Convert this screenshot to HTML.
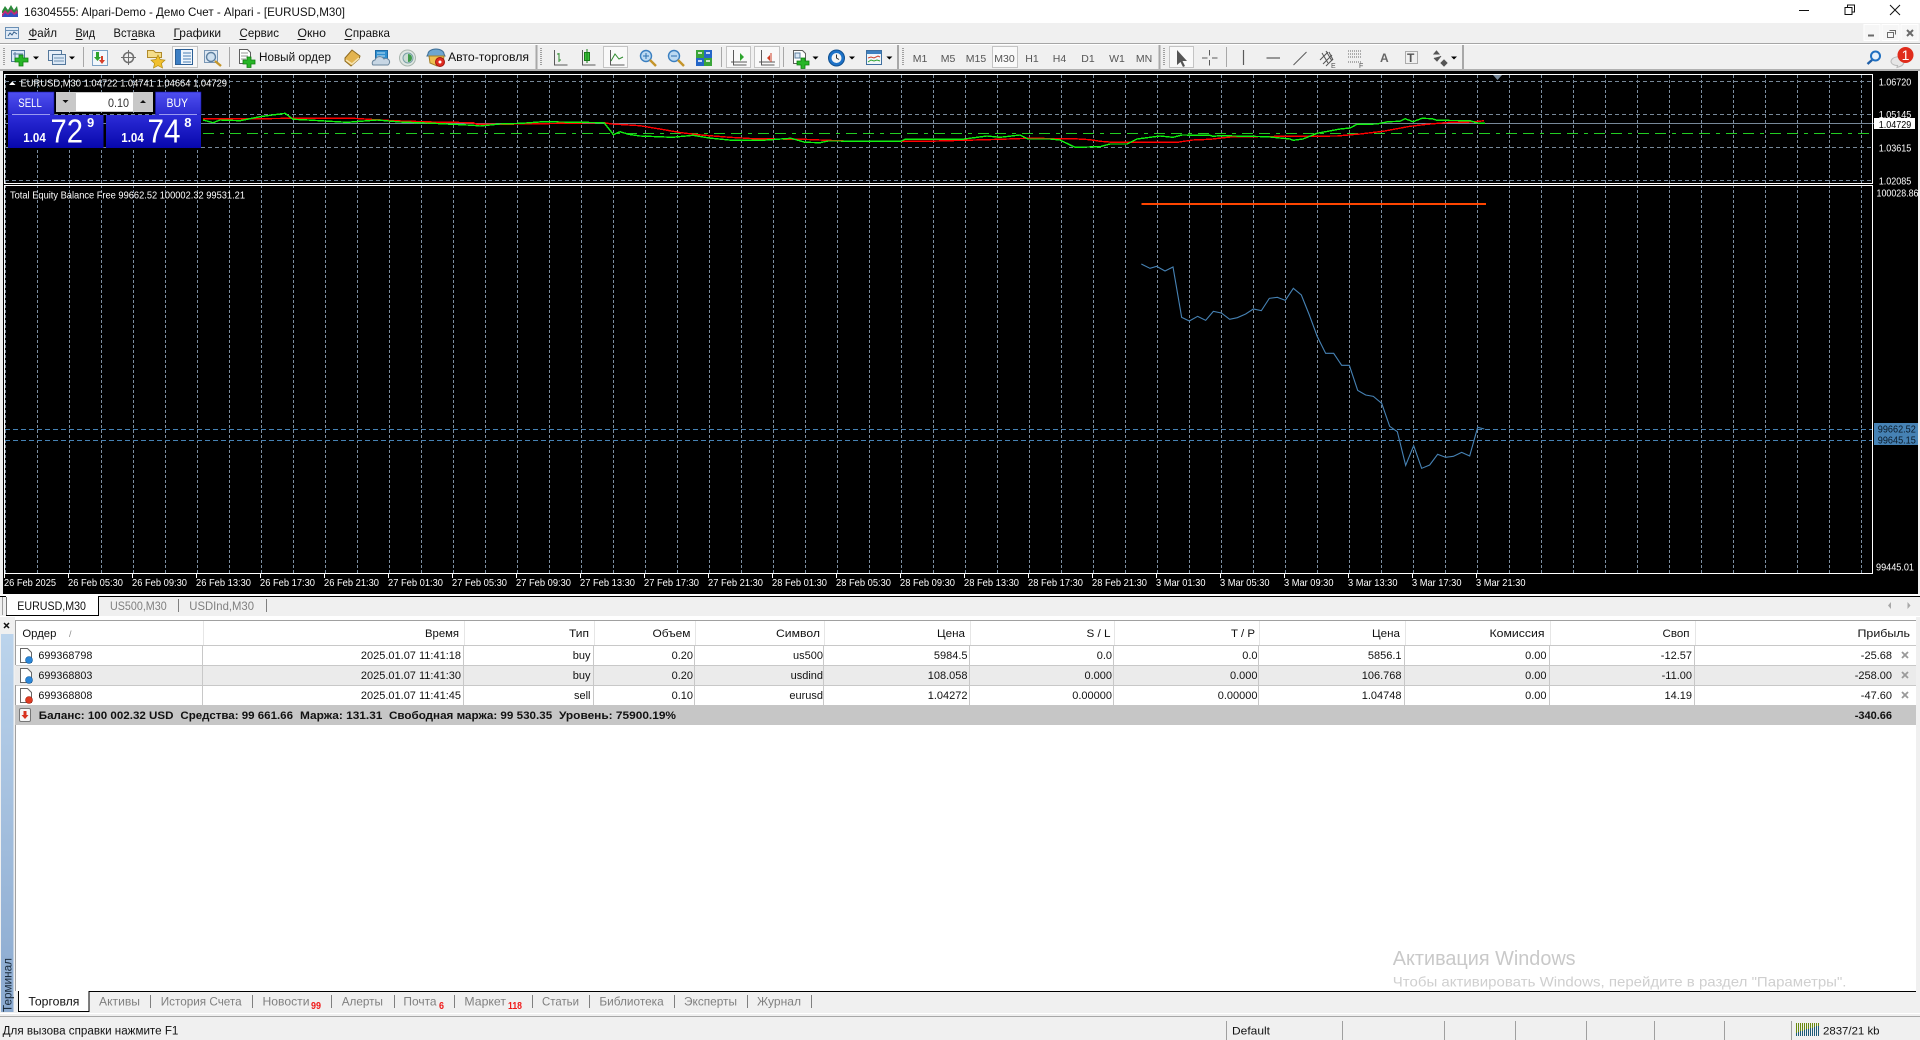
<!DOCTYPE html>
<html lang="ru"><head><meta charset="utf-8"><title>16304555: Alpari-Demo</title>
<style>
html,body{margin:0;padding:0;background:#f0f0f0;overflow:hidden}
svg{display:block}
text{font-family:"Liberation Sans",sans-serif;font-size:11px;fill:#111}
.w text,text.w{fill:#fff}
.c text{font-size:10.5px;fill:#fff}
.g text{fill:#7f7f7f}
.e text,text.e{text-anchor:end}
.tf text{font-size:10.5px;fill:#555;text-anchor:middle}
.sep line{stroke:#a8a8a8}
</style></head><body>
<svg xmlns="http://www.w3.org/2000/svg" width="1920" height="1040" viewBox="0 0 1920 1040">
<defs>
<pattern id="vg" patternUnits="userSpaceOnUse" x="5" y="75" width="32" height="5"><rect width="1" height="3" fill="#7c8ea0"/></pattern>
<linearGradient id="bu" x1="0" y1="0" x2="0" y2="1"><stop offset="0" stop-color="#4f4ff0"/><stop offset="1" stop-color="#2a2ad0"/></linearGradient>
<linearGradient id="bl" x1="0" y1="0" x2="0" y2="1"><stop offset="0" stop-color="#2c2cd8"/><stop offset="1" stop-color="#0707ac"/></linearGradient>
<linearGradient id="st" x1="0" y1="0" x2="0" y2="1"><stop offset="0" stop-color="#bcd4ec"/><stop offset="1" stop-color="#8aa9cf"/></linearGradient>
</defs>

<!-- title bar -->
<rect width="1920" height="23" fill="#fff"/>
<path d="M2 11l3-5 3 4 3-5 3 5 3-4 1 5v2H2z" fill="#2a8a3a"/><path d="M2 14l3-4 3 3 3-4 3 4 3-3 1 4v3H2z" fill="#c02878"/><path d="M2 17l3-4 3 2 3-3 3 3 4-2v4z" fill="#3050c0"/>
<text x="24" y="16" style="font-size:12px" textLength="321" lengthAdjust="spacingAndGlyphs">16304555: Alpari-Demo - Демо Счет - Alpari - [EURUSD,M30]</text>
<path d="M1799 10.5h10" stroke="#111"/>
<path d="M1845 7.500h7v7h-7zM1847.500 7.500v-2.500h7v7h-2.500" fill="none" stroke="#111"/>
<path d="M1890 5l10 10M1900 5l-10 10" stroke="#111" fill="none"/>

<!-- menu bar -->
<rect y="23" width="1920" height="20" fill="#f0f0f0"/>
<rect x="5.500" y="27.500" width="13" height="11" fill="#dfeaf6" stroke="#6a8fb5"/><path d="M5.500 30.500h13" stroke="#6a8fb5"/><path d="M8 36l2-3 2 2 2-3 3 2" fill="none" stroke="#35608c"/>
<text x="28.500" y="37" style="font-size:12px" textLength="28.500" lengthAdjust="spacingAndGlyphs">Файл</text>
<text x="75.500" y="37" style="font-size:12px" textLength="19.500" lengthAdjust="spacingAndGlyphs">Вид</text>
<text x="113.500" y="37" style="font-size:12px" textLength="41.500" lengthAdjust="spacingAndGlyphs">Вставка</text>
<text x="173.500" y="37" style="font-size:12px" textLength="47.500" lengthAdjust="spacingAndGlyphs">Графики</text>
<text x="239.500" y="37" style="font-size:12px" textLength="39.500" lengthAdjust="spacingAndGlyphs">Сервис</text>
<text x="297.500" y="37" style="font-size:12px" textLength="28.500" lengthAdjust="spacingAndGlyphs">Окно</text>
<text x="344.500" y="37" style="font-size:12px" textLength="45.500" lengthAdjust="spacingAndGlyphs">Справка</text>
<path d="M28.500 39.500h8M75.500 39.500h7M131 39.500h6M173.500 39.500h7M239.500 39.500h7M297.500 39.500h8M344.500 39.500h7" stroke="#111"/>

<!-- toolbar -->
<rect y="43" width="1920" height="1" fill="#a6a6a6"/>
<rect y="44" width="1920" height="1" fill="#fff"/>
<rect y="45" width="1920" height="24" fill="#f0f0f0"/>
<rect y="69" width="1920" height="2" fill="#b0b0b0"/>
<g class="sep">
<line x1="83.500" y1="47" x2="83.500" y2="67"/><line x1="229.500" y1="47" x2="229.500" y2="67"/><line x1="721.500" y1="47" x2="721.500" y2="67"/><line x1="783.500" y1="47" x2="783.500" y2="67"/><line x1="1226.500" y1="47" x2="1226.500" y2="67"/>
<line x1="536.500" y1="45" x2="536.500" y2="69" stroke-width="2"/><line x1="898" y1="45" x2="898" y2="69" stroke-width="2"/><line x1="1159.500" y1="45" x2="1159.500" y2="69" stroke-width="2"/><line x1="1463" y1="45" x2="1463" y2="69" stroke-width="2"/>
</g>
<path d="M4 48v18M541 48v18M903 48v18M1164 48v18" stroke="#a0a0a0" stroke-width="2" stroke-dasharray="1 1"/>
<g fill="#f9f9f9" stroke="#c4c4c4"><rect x="172.500" y="46.500" width="25" height="21"/><rect x="603.500" y="46.500" width="24" height="21"/><rect x="726.500" y="46.500" width="24" height="21"/><rect x="754.500" y="46.500" width="25" height="21"/><rect x="992.500" y="46.500" width="25" height="21"/><rect x="1169.500" y="46.500" width="24" height="21"/></g>

<!-- new chart -->
<rect x="11.500" y="50.500" width="13" height="11" fill="#dbe8f6" stroke="#54789c"/><path d="M13 54h10M15 52v8" stroke="#54789c"/>
<path d="M19 55h4v3h5v4h-5v4h-4v-4h-4v-4h4z" fill="#27b527" stroke="#0f7d0f" stroke-width=".8"/>
<path d="M33 56.500h6l-3 3zM69 56.500h6l-3 3z"/>
<!-- profiles -->
<rect x="48.500" y="50.500" width="13" height="10" fill="#e8eff8" stroke="#54789c"/><rect x="52.500" y="54.500" width="13" height="10" fill="#dbe8f6" stroke="#54789c"/><path d="M54 58h10M54 61h10" stroke="#6d8fb0"/>
<!-- expert -->
<rect x="92.500" y="50.500" width="15" height="15" fill="#f2f7fc" stroke="#7da2c5"/><path d="M96 52v5h-2l3.500 4 3.500-4h-2v-5z" fill="#2da32d"/><path d="M103 56v4h2l-3 4-3-4h2v-4z" fill="#d8402a"/>
<!-- crosshair -->
<circle cx="128.500" cy="57.500" r="5" fill="none" stroke="#6e6e6e" stroke-width="1.500"/><path d="M128.500 50v15M121 57.500h15" stroke="#6e6e6e"/>
<!-- folder star -->
<path d="M147.500 50.500h6l2 2h6v5h-14z" fill="#f5dd8a" stroke="#b08a2a"/><path d="M158 55l2.200 4.500 4.800.6-3.500 3.300 1 4.600-4.500-2.400-4.500 2.400 1-4.600-3.500-3.300 4.800-.6z" fill="#f1c02f" stroke="#b08a10" stroke-width=".7"/>
<!-- navigator -->
<rect x="175.500" y="49.500" width="17" height="15" fill="#eef5fc" stroke="#2c5f95"/><rect x="176" y="50" width="5" height="14" fill="#3d7fc4"/><path d="M183 53h8M183 56h8M183 59h8M183 62h8" stroke="#4a7fb5"/>
<!-- terminal search -->
<rect x="204.500" y="50.500" width="13" height="12" fill="#dde7f2" stroke="#7a97b5"/><circle cx="211" cy="57" r="4.500" fill="#cfe0ef" stroke="#5c7fa0" stroke-width="1.400"/><path d="M215 61l6 5" stroke="#c4952a" stroke-width="2.400"/>
<!-- new order -->
<path d="M239.500 49.500h8l3 3v11h-11z" fill="#fff" stroke="#5e5e5e"/><path d="M241 53h7M241 56h7M241 59h5" stroke="#9a9a9a"/>
<path d="M247 57h4v3h4v4h-4v3.500h-4V64h-4v-4h4z" fill="#27b527" stroke="#0f7d0f" stroke-width=".8"/>
<text x="259" y="61" style="font-size:11.500px" textLength="72" lengthAdjust="spacingAndGlyphs">Новый ордер</text>
<!-- book -->
<path d="M345 58l7-8 8 6-1 3-8 7-6-5z" fill="#e3b450" stroke="#8d6a20"/><path d="M346 60l6 4 7-6" fill="none" stroke="#f6e4b0" stroke-width="1.500"/>
<!-- news cloud -->
<rect x="375.500" y="50.500" width="12" height="9" fill="#2f8fd0" stroke="#1d6aa5"/><path d="M377 53h8M377 56h8" stroke="#bfe0f4"/>
<path d="M373 65a3 3 0 0 1 2-5 5 5 0 0 1 9-1 3.500 3.500 0 0 1 4 6z" fill="#c7d6e4" stroke="#6a859c"/>
<!-- signal -->
<circle cx="407.500" cy="58" r="8" fill="#dfe6e2" stroke="#a9b6ae"/><circle cx="408" cy="58" r="5" fill="#cbdcd4" stroke="#7aa0a8"/><path d="M408 54a4 4 0 0 1 0 8z" fill="#3d9a4a"/>
<!-- auto trading -->
<path d="M428 54a8 5 0 0 1 16 0l1 2h-18z" fill="#6ea6cf" stroke="#3e6e96"/><path d="M429 56h15l-1 7-6 3-7-3z" fill="#eec04e" stroke="#a5802a"/><circle cx="440" cy="62" r="4.500" fill="#df2c20" stroke="#a01810"/><circle cx="440" cy="62" r="1.500" fill="#fff"/>
<text x="448" y="61" style="font-size:11.500px" textLength="81" lengthAdjust="spacingAndGlyphs">Авто-торговля</text>
<!-- chart types -->
<g fill="none" stroke="#5a5a5a"><path d="M554.500 50v15h13"/><path d="M610.500 50v15h14"/><path d="M582.500 50v15h13"/></g>
<path d="M559 53v9M557 54h2M559 60h2" stroke="#2e8b2e" fill="none"/>
<rect x="584.500" y="52.500" width="5" height="8" fill="#39c339" stroke="#1a7a1a"/><path d="M587 49v14" stroke="#1a7a1a"/>
<path d="M611 61l4-7 4 5 4-2" fill="none" stroke="#2e8b2e"/>
<!-- zoom -->
<circle cx="646" cy="56" r="5.500" fill="#bcdaf2" stroke="#3a7fc0" stroke-width="1.400"/><path d="M643 56h6M646 53v6" stroke="#2a6fb0"/><path d="M650 60l6 6" stroke="#c4952a" stroke-width="2.400"/>
<circle cx="674" cy="56" r="5.500" fill="#bcdaf2" stroke="#3a7fc0" stroke-width="1.400"/><path d="M671 56h6" stroke="#2a6fb0"/><path d="M678 60l6 6" stroke="#c4952a" stroke-width="2.400"/>
<!-- tile -->
<rect x="696" y="50" width="8" height="8" fill="#3aa53a"/><rect x="704" y="50" width="8" height="8" fill="#2466c8"/><rect x="696" y="58" width="8" height="8" fill="#2466c8"/><rect x="704" y="58" width="8" height="8" fill="#3aa53a"/><path d="M698 53h4M706 53h4M698 61h4M706 61h4" stroke="#fff" stroke-width="1.500"/>
<!-- autoscroll, shift -->
<path d="M733.500 50v15h13M731 62h16M761.500 50v15h13M759 62h16" fill="none" stroke="#5a5a5a"/>
<path d="M740 53l4 4-4 4z" fill="#2ea52e"/><path d="M771 53v9" stroke="#d04028"/><path d="M770 55l-3 3 3 3z" fill="#d04028"/>
<!-- indicators -->
<path d="M793.500 50.500h9l3 3v10h-12z" fill="#fff" stroke="#5e5e5e"/><rect x="795" y="53" width="5" height="5" fill="#dbe8f6" stroke="#5e7f9e"/>
<path d="M801 58h4v3h4v4h-4v3.500h-4V65h-4v-4h4z" fill="#27b527" stroke="#0f7d0f" stroke-width=".8"/>
<path d="M812.500 56.500h6l-3 3zM849 56.500h6l-3 3zM886.400 56.500h6l-3 3z"/>
<!-- clock -->
<circle cx="836.500" cy="58" r="8" fill="#1d72c8" stroke="#11508f"/><circle cx="836.500" cy="58" r="5" fill="#f4f4f4"/><path d="M836.500 54.500v3.500l2.500 1.500" fill="none" stroke="#333"/>
<!-- template -->
<rect x="866.500" y="50.500" width="15" height="14" fill="#f2f6fa" stroke="#3f6f9f"/><rect x="867" y="51" width="14" height="3" fill="#3f80bf"/><path d="M868 58l3-1 3 1 4-2 2 1" fill="none" stroke="#d0402a"/><path d="M868 62l3-2 3 1 3-1 3 1" fill="none" stroke="#2ea52e"/>
<!-- timeframes -->
<g class="tf">
<text x="920" y="62">M1</text><text x="948" y="62">M5</text><text x="976" y="62">M15</text><text x="1004.500" y="62">M30</text><text x="1032" y="62">H1</text><text x="1059.500" y="62">H4</text><text x="1088" y="62">D1</text><text x="1117" y="62">W1</text><text x="1144" y="62">MN</text>
</g>
<!-- cursor etc -->
<path d="M1177 50v15l3.500-3 2.500 5 2-1-2.500-5h4.500z" fill="#555"/>
<path d="M1209.500 50v5.500M1209.500 60v5.500M1202 58h5.500M1212 58h5.500" stroke="#5a5a5a"/>
<path d="M1243.500 50v15" stroke="#5a5a5a" stroke-width="1.200"/>
<path d="M1266.500 58h13.500" stroke="#5a5a5a" stroke-width="1.200"/>
<path d="M1293.500 65l13-13" stroke="#5a5a5a"/>
<path d="M1320 60l8-8M1323 64l9-9M1326 66l7-7M1322 53l6 10M1326 51l6 10M1329 52l4 8" stroke="#555" fill="none"/>
<path d="M1348 51h14M1348 54h14M1348 57h14M1348 62h14" stroke="#666" stroke-dasharray="1 1"/>
<text x="1359" y="68" style="font-size:7px;fill:#555">F</text>
<text x="1331" y="68" style="font-size:7px;fill:#555">E</text>
<text x="1380" y="62" style="font-size:12px;font-weight:bold;fill:#666">A</text>
<rect x="1405.500" y="51.500" width="12" height="12" fill="none" stroke="#666" stroke-dasharray="1 1"/>
<text x="1407" y="62" style="font-size:12px;font-weight:bold;fill:#555">T</text>
<path d="M1434 54l2.500-3 2.500 3zM1441 63l3-3 3 3-3 3zM1434 58l3 3 4-5" fill="#555" stroke="#555"/>
<path d="M1451 56.500h6l-3 3z"/>
<!-- search, notification -->
<circle cx="1875.500" cy="56" r="4.500" fill="#e8f1fa" stroke="#1f6fc0" stroke-width="2"/><path d="M1872 60l-4.500 4" stroke="#1f5fa8" stroke-width="2.400"/>
<path d="M1891 62a6.500 5 0 1 1 9 4.500l-3 1 .5-2a6 5 0 0 1-6.500-3.500z" fill="#e6e6e6" stroke="#b8b8b8"/>
<circle cx="1905.500" cy="55" r="8" fill="#e02c1c"/><text x="1905.500" y="60" text-anchor="middle" class="w" style="font-size:14px">1</text>

<!-- MDI buttons -->
<g fill="#f6f6f6" stroke="#fff"><rect x="1864" y="24.500" width="16" height="16"/><rect x="1882" y="24.500" width="17" height="16"/><rect x="1901" y="24.500" width="17" height="16"/></g>
<path d="M1868 35.500h6" stroke="#6a6a6a" stroke-width="2"/>
<path d="M1887.500 32.500h6v5h-6zM1889.500 30.500h6v4" fill="none" stroke="#6a6a6a"/>
<path d="M1907 30l6 6M1913 30l-6 6" stroke="#6a6a6a" stroke-width="2"/>

<!-- chart area -->
<rect x="3" y="71" width="1915" height="523" fill="#000"/>
<rect x="5" y="75" width="1867" height="108" fill="url(#vg)"/>
<rect x="5" y="186" width="1867" height="387" fill="url(#vg)"/>
<path d="M5 81.500h1867M5 114.500h1867M5 147.500h1867M5 180.500h1867" stroke="#778899" stroke-dasharray="4 3"/>
<path d="M5 123.500h1869" stroke="#778899"/>
<path d="M203 133.500h1669" stroke="#22cc22" stroke-dasharray="11 6 4 6 11 6"/>
<polyline fill="none" stroke="#ff0000" stroke-width="1.400" shape-rendering="crispEdges" points="203,118.700 260,118.700 293,118.300 353,118.300 393,120.700 433,122 473,122.700 477,124.300 522,124 604,122.700 612,124 640,125.700 660,129 681,132.700 701,135 730,137.300 754,138.700 803,139.300 852,141.300 926,141.300 975,140 1000,139.300 1027,138.300 1073,138.700 1090,139.700 1100,141.300 1113,142.300 1177,142.300 1193,140 1210,139.300 1233,136.700 1300,136.300 1337,136 1360,134 1383,131.300 1410,126.300 1427,124.300 1450,122.300 1473,122 1484,120.700"/>
<polyline fill="none" stroke="#10f010" stroke-width="1.400" shape-rendering="crispEdges" points="203,120 213,122.700 220,120 240,120.700 260,116.700 285,113.300 293,119.300 308,120 347,122.300 377,120 400,122 433,123.300 473,125.300 480,126 500,124 522,123.300 543,121.700 604,122.700 613.500,134.700 620,131.700 628.600,134.300 640,136 672.600,137.300 693,135.300 709,138 732,140.300 762,140.300 791,138.300 805,142.300 820,142.700 828,141 901,141.300 905,139.300 962,139.300 987,136 1000,137.300 1020,135 1028,139 1050,139 1060,140 1075,147.300 1100,146.700 1110,144 1127,144 1137,139 1160,136 1173,137.300 1182,135 1210,135.300 1213,136.300 1220,135.700 1267,136.700 1290,139 1293,140.300 1303,139 1317,133.300 1340,129 1350,128 1357,124.300 1377,124 1388,121.700 1400,121.300 1405,118.700 1413,121.700 1422,118.300 1432,118.700 1437,120.300 1470,120.700 1477,123 1485,123.300"/>
<!-- frames -->
<g fill="#fff">
<rect x="4" y="74" width="1869" height="1"/><rect x="4" y="74" width="1" height="110"/><rect x="1872" y="74" width="1" height="110"/><rect x="4" y="183" width="1869" height="1"/>
<rect x="4" y="185" width="1869" height="1"/><rect x="4" y="185" width="1" height="389"/><rect x="1872" y="185" width="1" height="389"/><rect x="4" y="573" width="1869" height="1"/>
</g>
<path d="M1493 75h9l-4.500 5z" fill="#778899"/>
<path d="M4.500 574v4M68.500 574v4M132.500 574v4M196.500 574v4M260.500 574v4M324.500 574v4M388.500 574v4M452.500 574v4M516.500 574v4M580.500 574v4M644.500 574v4M708.500 574v4M772.500 574v4M836.500 574v4M900.500 574v4M964.500 574v4M1028.500 574v4M1092.500 574v4M1156.500 574v4M1220.500 574v4M1284.500 574v4M1348.500 574v4M1412.500 574v4M1476.500 574v4" stroke="#fff"/>
<!-- chart 2 -->
<rect x="1141.500" y="203" width="344.500" height="2" fill="#ff4500"/>
<path d="M5 429.500h1867M5 440.500h1867" stroke="#4682b4" stroke-dasharray="5 3"/>
<polyline transform="translate(1100 240) scale(.33333)" fill="none" stroke="#4682b4" stroke-width="3.300" points="124,72 150,85 170,79 195,93 219,81 245,232 268,243 293,229 317,241 340,214 364,219 389,238 412,233 437,222 460,207 484,212 508,175 532,172 556,181 580,145 604,165 628,225 652,290 677,340 701,340 725,376 748,376 773,451 797,465 820,469 845,490 869,559 892,575 917,676 941,617 965,685 989,675 1013,643 1037,652 1060,649 1085,637 1109,648 1133,562 1153,567"/>

<!-- chart labels -->
<g class="c">
<path d="M9 85l3.200-3.500 3.300 3.500z" fill="#fff"/>
<text x="20.500" y="86.500" textLength="206.500" lengthAdjust="spacingAndGlyphs">EURUSD,M30 1.04722 1.04741 1.04664 1.04729</text>
<text x="10" y="198.500" textLength="235" lengthAdjust="spacingAndGlyphs">Total Equity Balance Free 99662.52 100002.32 99531.21</text>
<text x="1878.800" y="85.500" textLength="32.500" lengthAdjust="spacingAndGlyphs">1.06720</text>
<text x="1878.800" y="118" textLength="32.500" lengthAdjust="spacingAndGlyphs">1.05145</text>
<text x="1878.800" y="151.500" textLength="32.500" lengthAdjust="spacingAndGlyphs">1.03615</text>
<text x="1878.800" y="184.500" textLength="32.500" lengthAdjust="spacingAndGlyphs">1.02085</text>
<text x="1876.500" y="196.500" textLength="42" lengthAdjust="spacingAndGlyphs">100028.86</text>
<text x="1876" y="570.500" textLength="38" lengthAdjust="spacingAndGlyphs">99445.01</text>
</g>
<rect x="1874" y="118" width="41" height="11" fill="#fff"/>
<text x="1878.800" y="128" style="font-size:10.500px;fill:#000" textLength="32.500" lengthAdjust="spacingAndGlyphs">1.04729</text>
<rect x="1874" y="423" width="44" height="22" fill="#4682b4"/>
<text x="1877.800" y="432.500" style="font-size:10.500px;fill:#0b1a28" textLength="38" lengthAdjust="spacingAndGlyphs">99662.52</text>
<text x="1877.800" y="443.500" style="font-size:10.500px;fill:#0b1a28" textLength="38" lengthAdjust="spacingAndGlyphs">99645.15</text>
<g class="c">
<text x="4" y="586" textLength="52" lengthAdjust="spacingAndGlyphs">26 Feb 2025</text>
<text x="68" y="586" textLength="55" lengthAdjust="spacingAndGlyphs">26 Feb 05:30</text>
<text x="132" y="586" textLength="55" lengthAdjust="spacingAndGlyphs">26 Feb 09:30</text>
<text x="196" y="586" textLength="55" lengthAdjust="spacingAndGlyphs">26 Feb 13:30</text>
<text x="260" y="586" textLength="55" lengthAdjust="spacingAndGlyphs">26 Feb 17:30</text>
<text x="324" y="586" textLength="55" lengthAdjust="spacingAndGlyphs">26 Feb 21:30</text>
<text x="388" y="586" textLength="55" lengthAdjust="spacingAndGlyphs">27 Feb 01:30</text>
<text x="452" y="586" textLength="55" lengthAdjust="spacingAndGlyphs">27 Feb 05:30</text>
<text x="516" y="586" textLength="55" lengthAdjust="spacingAndGlyphs">27 Feb 09:30</text>
<text x="580" y="586" textLength="55" lengthAdjust="spacingAndGlyphs">27 Feb 13:30</text>
<text x="644" y="586" textLength="55" lengthAdjust="spacingAndGlyphs">27 Feb 17:30</text>
<text x="708" y="586" textLength="55" lengthAdjust="spacingAndGlyphs">27 Feb 21:30</text>
<text x="772" y="586" textLength="55" lengthAdjust="spacingAndGlyphs">28 Feb 01:30</text>
<text x="836" y="586" textLength="55" lengthAdjust="spacingAndGlyphs">28 Feb 05:30</text>
<text x="900" y="586" textLength="55" lengthAdjust="spacingAndGlyphs">28 Feb 09:30</text>
<text x="964" y="586" textLength="55" lengthAdjust="spacingAndGlyphs">28 Feb 13:30</text>
<text x="1028" y="586" textLength="55" lengthAdjust="spacingAndGlyphs">28 Feb 17:30</text>
<text x="1092" y="586" textLength="55" lengthAdjust="spacingAndGlyphs">28 Feb 21:30</text>
<text x="1156" y="586" textLength="49.500" lengthAdjust="spacingAndGlyphs">3 Mar 01:30</text>
<text x="1220" y="586" textLength="49.500" lengthAdjust="spacingAndGlyphs">3 Mar 05:30</text>
<text x="1284" y="586" textLength="49.500" lengthAdjust="spacingAndGlyphs">3 Mar 09:30</text>
<text x="1348" y="586" textLength="49.500" lengthAdjust="spacingAndGlyphs">3 Mar 13:30</text>
<text x="1412" y="586" textLength="49.500" lengthAdjust="spacingAndGlyphs">3 Mar 17:30</text>
<text x="1476" y="586" textLength="49.500" lengthAdjust="spacingAndGlyphs">3 Mar 21:30</text>
</g>

<!-- one-click panel -->
<rect x="8" y="92" width="46" height="23" fill="url(#bu)" stroke="#1414a8" stroke-width=".6"/>
<rect x="155.500" y="92" width="45.500" height="23" fill="url(#bu)" stroke="#1414a8" stroke-width=".6"/>
<rect x="8" y="115" width="95.500" height="33" fill="url(#bl)"/>
<rect x="106" y="115" width="95" height="33" fill="url(#bl)"/>
<path d="M12 114.500h38M159 114.500h38" stroke="#9a9af0"/>
<text x="18.300" y="107" class="w" style="font-size:12px" textLength="23.500" lengthAdjust="spacingAndGlyphs">SELL</text>
<text x="166.500" y="107" class="w" style="font-size:12px" textLength="21.500" lengthAdjust="spacingAndGlyphs">BUY</text>
<rect x="56" y="92" width="97" height="20" fill="#c8c8c8"/>
<rect x="76" y="93" width="57" height="18" fill="#fff"/>
<path d="M62.500 100h6l-3 3zM140 103h6l-3-3z" fill="#111"/>
<text x="108" y="107" style="font-size:12px;fill:#333" textLength="21" lengthAdjust="spacingAndGlyphs">0.10</text>
<text x="23.300" y="142" class="w" style="font-size:13px;font-weight:bold" textLength="22.500" lengthAdjust="spacingAndGlyphs">1.04</text>
<text x="50.500" y="142.500" class="w" style="font-size:33px" textLength="32.500" lengthAdjust="spacingAndGlyphs">72</text>
<text x="87" y="127" class="w" style="font-size:13px;font-weight:bold">9</text>
<text x="121.300" y="142" class="w" style="font-size:13px;font-weight:bold" textLength="22.500" lengthAdjust="spacingAndGlyphs">1.04</text>
<text x="147.500" y="142.500" class="w" style="font-size:33px" textLength="33" lengthAdjust="spacingAndGlyphs">74</text>
<text x="184.300" y="127" class="w" style="font-size:13px;font-weight:bold">8</text>

<!-- chart tabs -->
<rect y="594" width="1920" height="2" fill="#fff"/>
<rect y="596" width="1920" height="1" fill="#000"/>
<rect y="597" width="1920" height="19" fill="#f0f0f0"/>
<rect x="2" y="597" width="1" height="18" fill="#a0a0a0"/>
<rect x="6" y="596" width="92" height="19" fill="#fff"/>
<path d="M98.500 596v19.500h-92.500" fill="none" stroke="#000"/>
<path d="M6.500 597v18" stroke="#777"/>
<text x="17.300" y="610" style="font-size:12px" textLength="68.700" lengthAdjust="spacingAndGlyphs">EURUSD,M30</text>
<g class="g">
<text x="110" y="610" style="font-size:12px" textLength="56.700" lengthAdjust="spacingAndGlyphs">US500,M30</text>
<text x="189.300" y="610" style="font-size:12px" textLength="64.700" lengthAdjust="spacingAndGlyphs">USDInd,M30</text>
</g>
<path d="M178.500 599v13M266.500 599v13" stroke="#808080"/>
<path d="M1891 602v7l-3-3.500zM1907.500 602v7l3-3.500z" fill="#a8a8a8"/>
<rect y="616" width="1920" height="1" fill="#fff"/>

<!-- terminal -->
<rect y="617" width="15" height="374" fill="#f0f0f0"/>
<path d="M4 623l5 5M9 623l-5 5" stroke="#111" stroke-width="1.500"/>

<rect x="15" y="617" width="1901" height="374" fill="#fff"/>
<rect x="1916" y="617" width="4" height="374" fill="#f0f0f0"/>
<rect x="15" y="620" width="1901" height="1" fill="#a0a0a0"/>
<rect x="15" y="620" width="1" height="371" fill="#a0a0a0"/>
<rect x="15" y="665" width="1901" height="20" fill="#ebebeb"/>
<rect x="15" y="705" width="1901" height="20" fill="#c6c6c6"/>
<path d="M16 645.500h1900M16 665.500h1900M16 685.500h1900" stroke="#c8c8c8"/>
<path d="M203.500 621v24M464.500 621v24M594.500 621v24M695.500 621v24M824.500 621v24M970.500 621v24M1114.500 621v24M1259.500 621v24M1405.500 621v24M1550.500 621v24M1695.500 621v24" stroke="#e6e6e6"/>
<path d="M202.500 646v59M463.500 646v59M593.500 646v59M694.500 646v59M823.500 646v59M969.500 646v59M1113.500 646v59M1258.500 646v59M1404.500 646v59M1549.500 646v59M1694.500 646v59" stroke="#c8c8c8"/>
<text x="22.400" y="637" textLength="34" lengthAdjust="spacingAndGlyphs">Ордер</text>
<text x="69" y="637" style="font-size:9px;fill:#888">/</text>
<g class="e">
<text x="459" y="637" textLength="34" lengthAdjust="spacingAndGlyphs">Время</text><text x="589" y="637" textLength="20" lengthAdjust="spacingAndGlyphs">Тип</text><text x="690.500" y="637" textLength="38" lengthAdjust="spacingAndGlyphs">Объем</text><text x="820" y="637" textLength="44" lengthAdjust="spacingAndGlyphs">Символ</text><text x="965" y="637" textLength="28" lengthAdjust="spacingAndGlyphs">Цена</text><text x="1110.500" y="637" textLength="24" lengthAdjust="spacingAndGlyphs">S / L</text><text x="1255" y="637" textLength="24" lengthAdjust="spacingAndGlyphs">T / P</text><text x="1400" y="637" textLength="28" lengthAdjust="spacingAndGlyphs">Цена</text><text x="1544.500" y="637" textLength="55" lengthAdjust="spacingAndGlyphs">Комиссия</text><text x="1689.500" y="637" textLength="27" lengthAdjust="spacingAndGlyphs">Своп</text><text x="1910" y="637" textLength="52.500" lengthAdjust="spacingAndGlyphs">Прибыль</text>
</g>
<!-- rows -->
<path d="M20.500 648.500h7l4 4v10h-11z" fill="#fff" stroke="#666"/><circle cx="29" cy="660" r="3.500" fill="#2a86d8" stroke="#135a9a" stroke-width=".6"/>
<path d="M20.500 668.500h7l4 4v10h-11z" fill="#fff" stroke="#666"/><circle cx="29" cy="680" r="3.500" fill="#2a86d8" stroke="#135a9a" stroke-width=".6"/>
<path d="M20.500 688.500h7l4 4v10h-11z" fill="#fff" stroke="#666"/><circle cx="29" cy="700" r="3.500" fill="#e03a20" stroke="#9a2010" stroke-width=".6"/>
<text x="38.400" y="659" textLength="54" lengthAdjust="spacingAndGlyphs">699368798</text><text x="38.400" y="679" textLength="54" lengthAdjust="spacingAndGlyphs">699368803</text><text x="38.400" y="699" textLength="54" lengthAdjust="spacingAndGlyphs">699368808</text>
<g class="e">
<text x="461" y="659">2025.01.07 11:41:18</text><text x="590.500" y="659">buy</text><text x="693" y="659">0.20</text><text x="823" y="659">us500</text><text x="967.500" y="659">5984.5</text><text x="1112" y="659">0.0</text><text x="1257.500" y="659">0.0</text><text x="1401.500" y="659">5856.1</text><text x="1546.500" y="659">0.00</text><text x="1692" y="659">-12.57</text><text x="1892" y="659">-25.68</text>
<text x="461" y="679">2025.01.07 11:41:30</text><text x="590.500" y="679">buy</text><text x="693" y="679">0.20</text><text x="823" y="679">usdind</text><text x="967.500" y="679">108.058</text><text x="1112" y="679">0.000</text><text x="1257.500" y="679">0.000</text><text x="1401.500" y="679">106.768</text><text x="1546.500" y="679">0.00</text><text x="1692" y="679">-11.00</text><text x="1892" y="679">-258.00</text>
<text x="461" y="699">2025.01.07 11:41:45</text><text x="590.500" y="699">sell</text><text x="693" y="699">0.10</text><text x="823" y="699">eurusd</text><text x="967.500" y="699">1.04272</text><text x="1112" y="699">0.00000</text><text x="1257.500" y="699">0.00000</text><text x="1401.500" y="699">1.04748</text><text x="1546.500" y="699">0.00</text><text x="1692" y="699">14.19</text><text x="1892" y="699">-47.60</text>
</g>
<path d="M1902 652l6 6M1908 652l-6 6M1902 672l6 6M1908 672l-6 6M1902 692l6 6M1908 692l-6 6" stroke="#9a9a9a" stroke-width="1.800"/>
<!-- summary -->
<rect x="19.500" y="708.500" width="11" height="13" rx="1.500" fill="#f6f6f6" stroke="#777"/><path d="M23.500 711h3v4h2l-3.500 4-3.500-4h2z" fill="#d8301c"/>
<text x="38.800" y="719" style="font-weight:bold" textLength="134.700" lengthAdjust="spacingAndGlyphs">Баланс: 100 002.32 USD</text>
<text x="180.400" y="719" style="font-weight:bold" textLength="112.600" lengthAdjust="spacingAndGlyphs">Средства: 99 661.66</text>
<text x="300" y="719" style="font-weight:bold" textLength="82.400" lengthAdjust="spacingAndGlyphs">Маржа: 131.31</text>
<text x="389" y="719" style="font-weight:bold" textLength="163.200" lengthAdjust="spacingAndGlyphs">Свободная маржа: 99 530.35</text>
<text x="559" y="719" style="font-weight:bold" textLength="117" lengthAdjust="spacingAndGlyphs">Уровень: 75900.19%</text>
<text x="1892" y="719" class="e" style="font-weight:bold">-340.66</text>
<!-- watermark -->
<text x="1392.800" y="965" style="font-size:20px;fill:#c9c9c9" textLength="182.800" lengthAdjust="spacingAndGlyphs">Активация Windows</text>
<text x="1392.800" y="986.500" style="font-size:14px;fill:#cfcfcf" textLength="453.700" lengthAdjust="spacingAndGlyphs">Чтобы активировать Windows, перейдите в раздел "Параметры".</text>

<!-- bottom tabs -->
<rect y="991" width="1920" height="25" fill="#f0f0f0"/>
<rect x="18" y="991" width="1898" height="1" fill="#000"/>
<rect x="18" y="991" width="70.500" height="20" fill="#fff"/>
<path d="M18.500 991v20.500h70.500v-20.500" fill="none" stroke="#000"/>
<text x="28.400" y="1005.500" style="font-size:12px" textLength="51" lengthAdjust="spacingAndGlyphs">Торговля</text>
<g class="g">
<text x="99" y="1005.500" style="font-size:12px" textLength="41" lengthAdjust="spacingAndGlyphs">Активы</text>
<text x="160.700" y="1005.500" style="font-size:12px" textLength="81" lengthAdjust="spacingAndGlyphs">История Счета</text>
<text x="262.500" y="1005.500" style="font-size:12px" textLength="47" lengthAdjust="spacingAndGlyphs">Новости</text>
<text x="341.700" y="1005.500" style="font-size:12px" textLength="41.300" lengthAdjust="spacingAndGlyphs">Алерты</text>
<text x="403.400" y="1005.500" style="font-size:12px" textLength="33.200" lengthAdjust="spacingAndGlyphs">Почта</text>
<text x="464.400" y="1005.500" style="font-size:12px" textLength="41.600" lengthAdjust="spacingAndGlyphs">Маркет</text>
<text x="542" y="1005.500" style="font-size:12px" textLength="37" lengthAdjust="spacingAndGlyphs">Статьи</text>
<text x="599.400" y="1005.500" style="font-size:12px" textLength="64.300" lengthAdjust="spacingAndGlyphs">Библиотека</text>
<text x="684" y="1005.500" style="font-size:12px" textLength="53" lengthAdjust="spacingAndGlyphs">Эксперты</text>
<text x="757" y="1005.500" style="font-size:12px" textLength="44" lengthAdjust="spacingAndGlyphs">Журнал</text>
</g>
<text x="311" y="1009" style="font-size:10px;fill:#f01818;font-weight:bold" textLength="10" lengthAdjust="spacingAndGlyphs">99</text>
<text x="439" y="1009" style="font-size:10px;fill:#f01818;font-weight:bold" textLength="5" lengthAdjust="spacingAndGlyphs">6</text>
<text x="508" y="1009" style="font-size:10px;fill:#f01818;font-weight:bold" textLength="14" lengthAdjust="spacingAndGlyphs">118</text>
<path d="M150.500 995v13M252.500 995v13M331.500 995v13M394.500 995v13M454.500 995v13M532.500 995v13M589.500 995v13M674.500 995v13M747.500 995v13M811.500 995v13" stroke="#808080"/>
<rect y="1013" width="1920" height="1" fill="#fff"/>
<rect y="1016" width="1920" height="1" fill="#a8a8a8"/>

<!-- terminal strip drawn over bottom band -->
<rect x="1" y="634" width="12.500" height="378" fill="url(#st)"/>
<text transform="translate(11.500 1012) rotate(-90)" style="font-size:11.500px;fill:#1a2a3a" textLength="54" lengthAdjust="spacingAndGlyphs">Терминал</text>

<!-- status bar -->
<rect y="1017" width="1920" height="23" fill="#f0f0f0"/>
<text x="2.700" y="1034.500" style="font-size:11.500px" textLength="175.700" lengthAdjust="spacingAndGlyphs">Для вызова справки нажмите F1</text>
<path d="M1226.500 1021v19M1342.500 1021v19M1444.500 1021v19M1515.500 1021v19M1586.500 1021v19M1654.500 1021v19M1724.500 1021v19M1791.500 1021v19" stroke="#a0a0a0"/>
<text x="1232" y="1034.500" textLength="38" lengthAdjust="spacingAndGlyphs">Default</text>
<path d="M1796.500 1036v-13M1798.500 1036v-13M1800.500 1036v-13M1802.500 1036v-13M1804.500 1036v-13M1806.500 1036v-13M1808.500 1036v-13M1810.500 1036v-13M1812.500 1036v-13M1814.500 1036v-13M1816.500 1036v-13M1818.500 1036v-13" stroke="#6a8a10"/>
<path d="M1796.500 1036v-3M1798.500 1036v-4M1800.500 1036v-5M1802.500 1036v-5M1804.500 1036v-6M1806.500 1036v-7M1808.500 1036v-7M1810.500 1036v-8M1812.500 1036v-8M1814.500 1036v-9M1816.500 1036v-10M1818.500 1036v-10" stroke="#1c5a78"/>
<text x="1823" y="1034.500" textLength="56.500" lengthAdjust="spacingAndGlyphs">2837/21 kb</text>
</svg>
</body></html>
